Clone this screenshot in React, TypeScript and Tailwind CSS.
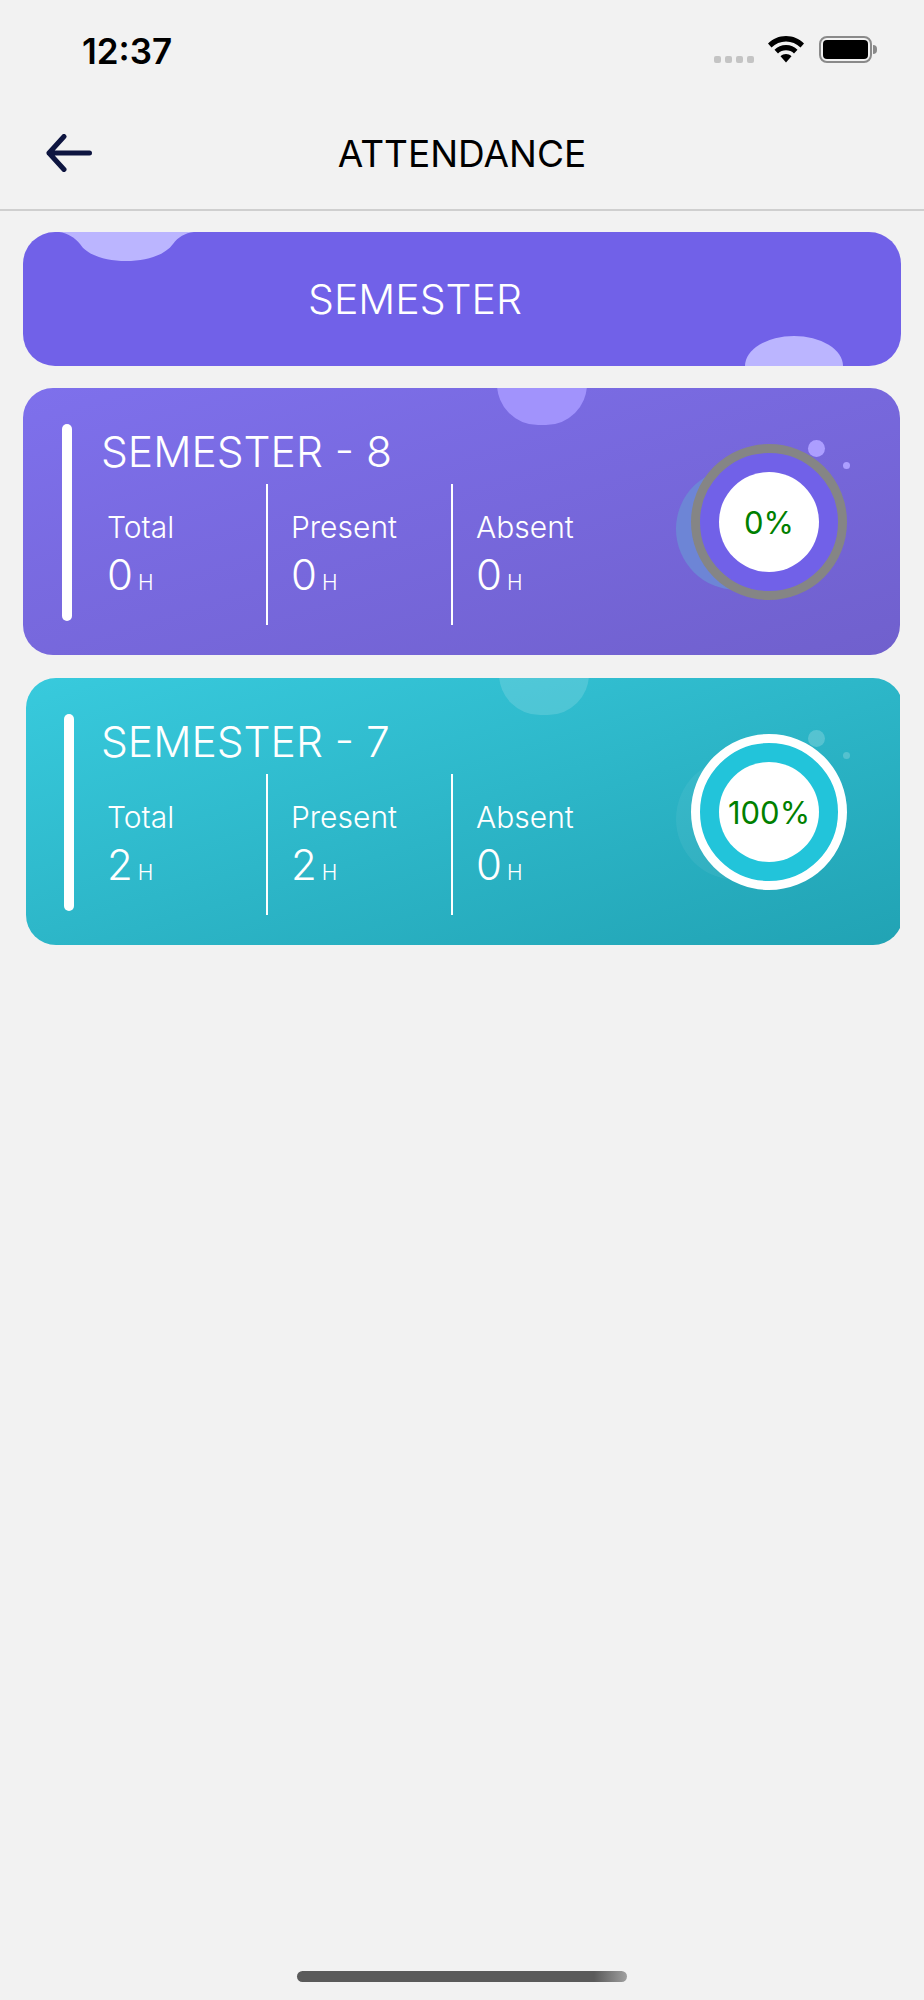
const font = "font-['Inter',sans-serif]";

interface StatProps {
  label: string;
  value: string;
  divider?: boolean;
}

const Stat = ({ label, value, divider }: StatProps) => (
  <div className={`flex flex-col h-[141px] pt-[26px] ${divider ? "border-l-2 border-white pl-[23px] w-[185px]" : "pl-[4px] w-[163px]"}`}>
    <span className="text-[30px] leading-[34px] font-light text-white">{label}</span>
    <div className="flex items-baseline gap-[5px] mt-[9px]">
      <span className="text-[42px] leading-[44px] font-light text-white">{value}</span>
      <span className="text-[21px] leading-[24px] font-light text-white">H</span>
    </div>
  </div>
);

interface CardProps {
  title: string;
  total: string;
  present: string;
  absent: string;
  percent: string;
  cardClass: string;
  barClass: string;
  contentClass: string;
  ringClass: string;
  blobClass: string;
  bubbleClass: string;
  topBubbleClass: string;
}

const SemesterCard = (p: CardProps) => (
  <div className="mx-[23px] w-[877px] h-[267px] overflow-hidden">
    <div className={`relative flex h-[267px] w-[877px] rounded-[30px] overflow-hidden ${p.cardClass}`}>
      <div className={`absolute top-[-45px] w-[90px] h-[82px] rounded-full ${p.topBubbleClass}`} />
      <div className={`w-[10px] h-[197px] mt-[36px] rounded-full bg-white shrink-0 ${p.barClass}`} />
      <div className={`flex flex-col w-[533px] shrink-0 pt-[36px] ${p.contentClass}`}>
        <div className="text-[42.5px] leading-[54px] font-light text-white h-[60px] mt-[1px] mb-[-1px] ml-[-2px]">{p.title}</div>
        <div className="flex">
          <Stat label="Total" value={p.total} />
          <Stat label="Present" value={p.present} divider />
          <Stat label="Absent" value={p.absent} divider />
        </div>
      </div>
      <div className="relative mt-[56px] ml-[55px] w-[156px] h-[156px] shrink-0">
        <div className={`absolute left-[-15px] top-[24px] w-[122px] h-[122px] rounded-full ${p.blobClass}`} />
        <div className={`absolute left-[117px] top-[-4px] w-[17px] h-[17px] rounded-full ${p.bubbleClass}`} />
        <div className={`absolute left-[152px] top-[18px] w-[7px] h-[7px] rounded-full ${p.bubbleClass}`} />
        <div className={`relative flex items-center justify-center w-[156px] h-[156px] rounded-full border-[9px] ${p.ringClass}`}>
          <div className="flex items-center justify-center w-[100px] h-[100px] pt-[2px] rounded-full bg-white text-[31px] font-normal text-[#008000]">
            {p.percent}
          </div>
        </div>
      </div>
    </div>
  </div>
);

export default function App() {
  return (
    <div className={`relative flex flex-col w-[924px] h-[2000px] bg-[#f2f2f2] ${font}`}>
      {/* status bar */}
      <div className="flex items-start h-[80px] pt-[31px] pl-[82px] pr-[47px]">
        <span className="text-[35px] leading-[40px] font-semibold text-black">12:37</span>
        <div className="flex items-start ml-auto">
          <div className="flex gap-[4px] mt-[25px] mr-[14px]">
            <span className="w-[7px] h-[7px] rounded-[2px] bg-[#c4c4c4]" />
            <span className="w-[7px] h-[7px] rounded-[2px] bg-[#c4c4c4]" />
            <span className="w-[7px] h-[7px] rounded-[2px] bg-[#c4c4c4]" />
            <span className="w-[7px] h-[7px] rounded-[2px] bg-[#c4c4c4]" />
          </div>
          <svg width="36" height="27" viewBox="0 0 36 27" className="mt-[5px]">
            <path d="M18 0C11 0 5 2.700 0 7.500L3.500 11.500C7.500 7.500 12.500 5.500 18 5.500C23.500 5.500 28.500 7.500 32.500 11.500L36 7.500C31 2.700 25 0 18 0Z" fill="#000" />
            <path d="M18 9C13.500 9 9.500 10.700 6.500 13.700L10 17.500C12 15.500 15 14.300 18 14.300C21 14.300 24 15.500 26 17.500L29.500 13.700C26.500 10.700 22.500 9 18 9Z" fill="#000" />
            <path d="M18 18C16 18 14 18.800 12.500 20.300L18 26.500L23.500 20.300C22 18.800 20 18 18 18Z" fill="#000" />
          </svg>
          <div className="flex items-center ml-[15px] mt-[5px]">
            <div className="flex items-center justify-center w-[53px] h-[27px] rounded-[8px] border-2 border-[#8a8a8a]">
              <div className="w-[45px] h-[19px] rounded-[4px] bg-black" />
            </div>
            <div className="w-[4px] h-[9px] ml-[1px] rounded-r-full bg-[#8a8a8a]" />
          </div>
        </div>
      </div>

      {/* header */}
      <div className="relative flex items-center justify-center h-[131px] border-b-2 border-[#cfcfcf]">
        <svg width="46" height="38" viewBox="0 0 46 38" fill="none" className="absolute left-[46px] top-[54px]">
          <path d="M43.500 19H3M18 2.500L3 19L18 35.500" stroke="#0e1540" strokeWidth="5" strokeLinecap="round" strokeLinejoin="round" />
        </svg>
        <span className="text-[37px] leading-[46px] font-normal text-black mt-[19px]">ATTENDANCE</span>
      </div>

      {/* banner */}
      <div className="relative flex items-center mx-[23px] mt-[21px] h-[134px] pl-[285px] rounded-[32px] overflow-hidden bg-[#7161e8]">
        <svg width="207" height="30" viewBox="0 0 207 30" className="absolute left-0 top-0">
          <path d="M36 0C45 1 52 6 57 12C64 23 82 29 103 29C124 29 142 23 150 12C155 5 162 1 171 0Z" fill="#bbb5ff" />
        </svg>
        <div className="absolute left-[722px] bottom-[-30px] w-[98px] h-[60px] rounded-[50%] bg-[#bbb5ff]" />
        <span className="relative text-[41px] leading-[50px] font-light text-white">SEMESTER</span>
      </div>

      <div className="flex flex-col gap-[23px] mt-[22px]">
        <SemesterCard
          title="SEMESTER - 8"
          total="0"
          present="0"
          absent="0"
          percent="0%"
          cardClass="ml-0 bg-gradient-to-br from-[#7e70ec] to-[#7060cd]"
          barClass="ml-[39px]"
          contentClass="ml-[31px]"
          ringClass="border-[#858585] bg-[#7161e8]"
          blobClass="bg-[#6d85d6]"
          bubbleClass="bg-[#ac9eff]"
          topBubbleClass="left-[474px] bg-[#a193fc]"
        />
        <SemesterCard
          title="SEMESTER - 7"
          total="2"
          present="2"
          absent="0"
          percent="100%"
          cardClass="ml-[3px] bg-gradient-to-br from-[#38cadd] to-[#21a3b4]"
          barClass="ml-[38px]"
          contentClass="ml-[29px]"
          ringClass="border-white bg-[#22c4da]"
          blobClass="bg-[#ffffff0f]"
          bubbleClass="bg-[#ffffff33]"
          topBubbleClass="left-[473px] bg-[#ffffff26]"
        />
      </div>

      {/* home indicator */}
      <div className="mt-auto mb-[18px] mx-auto w-[330px] h-[11px] rounded-full bg-gradient-to-r from-[#5a5a5a] via-[#5a5a5a] via-90% to-[#a0a0a0]" />
    </div>
  );
}
